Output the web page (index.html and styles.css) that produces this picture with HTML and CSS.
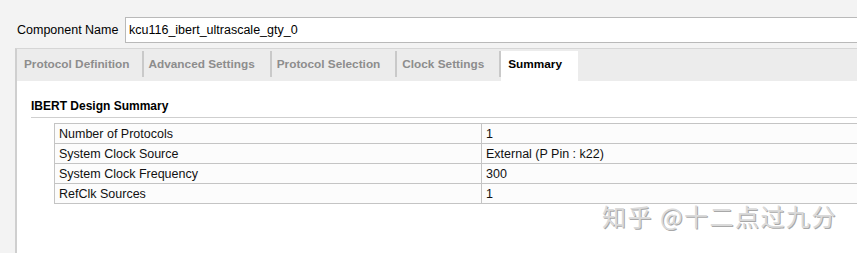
FILE: index.html
```html
<!DOCTYPE html>
<html lang="en">
<head>
    <meta charset="UTF-8">
    <title>IBERT Summary</title>
    <link rel="stylesheet" href="styles.css">
</head>
<body>
    <div class="page">
        <div class="name-row">
            <label class="name-label" for="comp-name">Component Name</label>
            <input type="text" id="comp-name" class="name-input" value="kcu116_ibert_ultrascale_gty_0">
        </div>
        <div class="panel">
            <div class="tabs">
                <div class="tab">Protocol Definition</div>
                <div class="tab">Advanced Settings</div>
                <div class="tab">Protocol Selection</div>
                <div class="tab">Clock Settings</div>
                <div class="tab active">Summary</div>
            </div>
            <div class="content">
                <h1 class="title">IBERT Design Summary</h1>
                <table class="summary">
                    <tr><td class="key">Number of Protocols</td><td>1</td></tr>
                    <tr><td class="key">System Clock Source</td><td>External (P Pin : k22)</td></tr>
                    <tr><td class="key">System Clock Frequency</td><td>300</td></tr>
                    <tr><td class="key">RefClk Sources</td><td>1</td></tr>
                </table>
                <div class="watermark">知乎 @十二点过九分</div>
            </div>
        </div>
    </div>
</body>
</html>
```

FILE: styles.css
```css
html{
    box-sizing: border-box;
}
*,*::before,*::after{
    box-sizing: inherit;
    margin: 0;
    padding: 0;
}
body{
    background-color: #f3f3f3;
    font-family: "Liberation Sans", Arial, sans-serif;
    font-size: 12px;
    color: #000;
    overflow: hidden;
}
.page{
    width: 880px;
    height: 253px;
    padding-top: 17px;
}
.name-row{
    display: flex;
    align-items: center;
    height: 26px;
}
.name-label{
    width: 125px;
    padding-left: 17px;
    font-size: 12.5px;
}
.name-input{
    flex: 1;
    height: 26px;
    border: 1px solid #b9b9b9;
    background-color: #fff;
    padding-left: 3px;
    font-family: inherit;
    font-size: 12.5px;
    outline: none;
}
.panel{
    margin-top: 5px;
    margin-left: 15px;
    border-left: 2px solid #cfcfcf;
    border-top: 1px solid #d6d6d6;
    background-color: #fff;
    height: 210px;
}
.tabs{
    display: flex;
    height: 32px;
    background-color: #ececec;
    padding-top: 2px;
}
.tab{
    display: flex;
    align-items: center;
    padding: 0 15px 0 5px;
    font-size: 11.8px;
    font-weight: bold;
    color: #8d8d8d;
    border-right: 2px solid #c9c9c9;
    margin-bottom: 4px;
}
.tab:first-child{
    padding-left: 7px;
    padding-right: 12px;
}
.tab.active{
    border-right: none;
    margin-bottom: 0;
    padding: 0 16px 4px 7px;
    background-color: #fff;
    color: #000;
}
.content{
    position: relative;
    padding: 18px 0 0 14px;
}
.title{
    font-size: 12px;
    font-weight: bold;
    padding-bottom: 4px;
    border-bottom: 1px solid #cfcfcf;
}
.summary{
    margin: 5px 0 0 23px;
    border-collapse: collapse;
    width: 830px;
    background-color: #fcfcfc;
}
.summary td{
    border: 1px solid #c4c4c4;
    height: 20px;
    padding: 0 4px 0 4px;
    font-size: 12.5px;
    color: #111;
}
.summary .key{
    width: 427px;
}
.watermark{
    position: absolute;
    left: 585px;
    top: 117px;
    font-family: "Noto Sans CJK SC", sans-serif;
    font-size: 24px;
    color: #dadada;
    text-shadow: 1px 1px 0 #a8a8a8;
    letter-spacing: 1.5px;
}
```
